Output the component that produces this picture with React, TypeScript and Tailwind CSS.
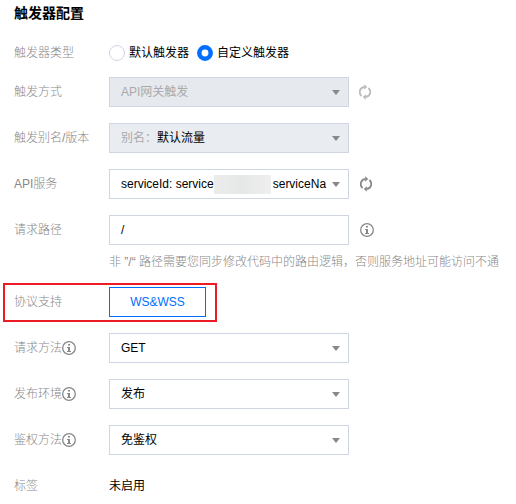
import type { ReactNode } from "react";

function InfoIcon() {
  return (
    <svg width="14" height="14" viewBox="0 0 14 14" fill="none" className="shrink-0">
      <circle cx="7" cy="7" r="6.3" stroke="#888" strokeWidth="1.3" />
      <path d="M6 3h2v1.6H6zM5 6h3v4h1v1H5v-1h1V7H5z" fill="#888" />
    </svg>
  );
}

function RefreshIcon({ color }: { color: string }) {
  return (
    <svg width="12" height="16" viewBox="0 0 12 16" fill="none" className="shrink-0">
      <path d="M2.6 12A5.1 5.1 0 0 1 5.4 3M9.4 4A5.1 5.1 0 0 1 6.6 13" stroke={color} strokeWidth="1.8" />
      <path d="M5.2.2 8.2 3l-3 2.8zM6.8 10.2l-3 2.8 3 2.8z" fill={color} />
    </svg>
  );
}

function Row({ label, info, children }: { label: string; info?: boolean; children: ReactNode }) {
  return (
    <div className="relative flex h-[30px] items-center">
      <div className="flex w-[95px] shrink-0 items-center font-light text-[#888]">
        <span>{label}</span>
        {info && <InfoIcon />}
      </div>
      {children}
    </div>
  );
}

function Select({ children, tone = "bg-white" }: { children: ReactNode; tone?: string }) {
  return (
    <div className={`flex h-[30px] w-[240px] items-center justify-between border border-[#cfd5e2] pr-[8px] pl-[11px] ${tone}`}>
      <div className="flex items-center">{children}</div>
      <svg width="8" height="5" viewBox="0 0 8 5">
        <path d="M0 0h8L4 5z" fill="#888" />
      </svg>
    </div>
  );
}

export default function App() {
  return (
    <div className="h-[504px] w-[516px] overflow-hidden bg-white pl-[14px] font-['Liberation_Sans','Noto_Sans_CJK_SC',sans-serif] text-[12px] leading-[18px] whitespace-nowrap text-black">
      <h1 className="pt-[3px] text-[14px] leading-[20px] font-bold">触发器配置</h1>
      <div className="mt-[15px]">
        <Row label="触发器类型">
          <span className="size-[16px] rounded-full border border-[#cfd5e2]" />
          <span className="ml-[4px]">默认触发器</span>
          <svg className="ml-[8px]" width="16" height="16" viewBox="0 0 16 16" fill="none">
            <circle cx="8" cy="8" r="5.7" stroke="#006eff" strokeWidth="4.5" />
          </svg>
          <span className="ml-[4px]">自定义触发器</span>
        </Row>
      </div>
      <div className="mt-[9px] flex flex-col gap-[16px]">
        <Row label="触发方式">
          <Select tone="bg-[#e6e9ee] text-[#aaa]">API网关触发</Select>
          <span className="ml-[10px]"><RefreshIcon color="#bbb" /></span>
        </Row>
        <Row label="触发别名/版本">
          <Select tone="bg-[#e9ecf1]">
            <span className="text-[#aaa]">别名：</span>
            <span>默认流量</span>
          </Select>
        </Row>
        <Row label="API服务">
          <Select>
            <span>serviceId: service</span>
            <span className="h-[19px] w-[57px] bg-linear-to-r from-[#ececec] via-[#e6e7e7] to-[#efefef]" />
            <span className="ml-[2px] w-[54px]">serviceNa</span>
          </Select>
          <span className="ml-[11px]"><RefreshIcon color="#888" /></span>
        </Row>
        <Row label="请求路径">
          <div className="flex h-[30px] w-[240px] items-center border border-[#cfd5e2] pl-[11px]">/</div>
          <span className="ml-[11px]"><InfoIcon /></span>
        </Row>
      </div>
      <p className="mt-[8px] ml-[95px] font-light text-[#888]">非 ”/“ 路径需要您同步修改代码中的路由逻辑，否则服务地址可能访问不通</p>
      <div className="mt-[16px] flex flex-col gap-[16px]">
        <Row label="协议支持">
          <button className="h-[30px] w-[97px] border border-[#006eff] text-[#006eff]">WS&amp;WSS</button>
          <span className="absolute -top-[4px] -left-[11px] h-[39px] w-[214px] border-2 border-[#ed1c24]" />
        </Row>
        <Row label="请求方法" info>
          <Select>GET</Select>
        </Row>
        <Row label="发布环境" info>
          <Select>发布</Select>
        </Row>
        <Row label="鉴权方法" info>
          <Select>免鉴权</Select>
        </Row>
        <Row label="标签">
          <span>未启用</span>
        </Row>
      </div>
    </div>
  );
}
